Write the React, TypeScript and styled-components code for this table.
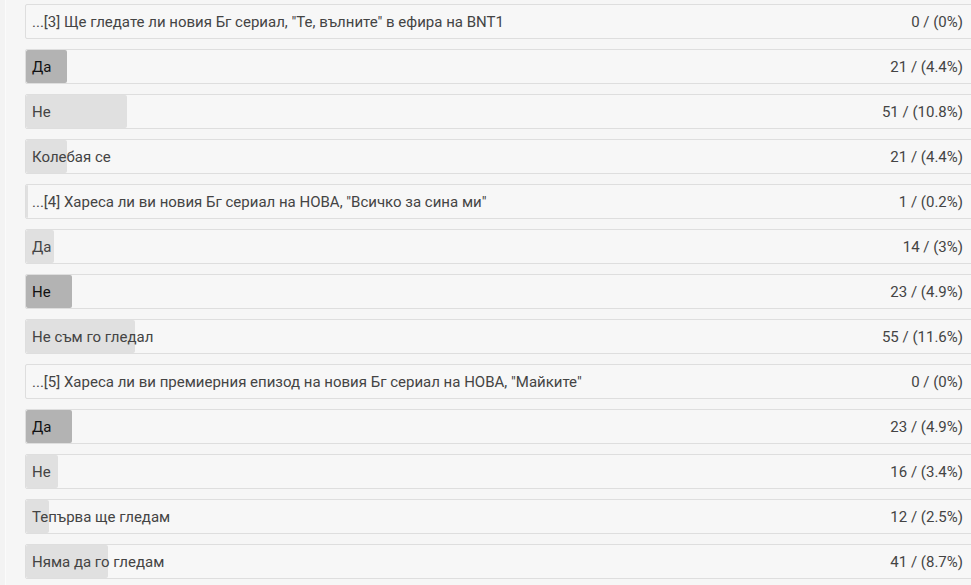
import { FC, ReactElement } from 'react'
import styled, { createGlobalStyle } from 'styled-components'

type Answer = { label: string, votes: number, pct: number, mine?: boolean, question?: boolean }

const ROW_WIDTH = 950
const BAR_SCALE = 938

const rows: Answer[] = [
  { label: '...[3] Ще гледате ли новия Бг сериал, "Те, вълните" в ефира на BNT1', votes: 0, pct: 0, question: true },
  { label: 'Да', votes: 21, pct: 4.4, mine: true },
  { label: 'Не', votes: 51, pct: 10.8 },
  { label: 'Колебая се', votes: 21, pct: 4.4 },
  { label: '...[4] Хареса ли ви новия Бг сериал на НОВА, "Всичко за сина ми"', votes: 1, pct: 0.2, question: true },
  { label: 'Да', votes: 14, pct: 3 },
  { label: 'Не', votes: 23, pct: 4.9, mine: true },
  { label: 'Не съм го гледал', votes: 55, pct: 11.6 },
  { label: '...[5] Хареса ли ви премиерния епизод на новия Бг сериал на НОВА, "Майките"', votes: 0, pct: 0, question: true },
  { label: 'Да', votes: 23, pct: 4.9, mine: true },
  { label: 'Не', votes: 16, pct: 3.4 },
  { label: 'Тепърва ще гледам', votes: 12, pct: 2.5 },
  { label: 'Няма да го гледам', votes: 41, pct: 8.7 }
]

const App: FC = (): ReactElement => {
  return (
    <>
      <GlobalStyle />
      <Results>
        {rows.map((r, i) => (
          <Row key={i}>
            <Bar $mine={r.mine} style={{ width: `${Math.round((r.pct / 100) * BAR_SCALE)}px` }} />
            <Label $mine={r.mine}>{r.label}</Label>
            <Count>{r.votes} / ({r.pct}%)</Count>
          </Row>
        ))}
      </Results>
    </>
  )
}

const GlobalStyle = createGlobalStyle`
  html, body {
    margin: 0;
    padding: 0;
    background: #f3f3f3;
    overflow: hidden;
  }
  body {
    font-family: Roboto, 'Liberation Sans', sans-serif;
  }
`
const Results = styled.div`
  display: flex;
  flex-direction: column;
  gap: 10px;
  margin-left: 5px;
  padding: 4px 0 10px 19px;
  border-left: 1px solid #fbfbfb;
  background: #f6f6f6;
  min-height: 585px;
  box-sizing: border-box;
`
const Row = styled.div`
  position: relative;
  display: flex;
  align-items: center;
  justify-content: space-between;
  width: ${ROW_WIDTH}px;
  height: 35px;
  box-sizing: border-box;
  padding: 0 11px 0 6px;
  background: #f7f7f7;
  border: 1px solid #dedede;
  border-radius: 2px;
  font-size: 15px;
  color: #444;
  overflow: hidden;
`
const Bar = styled.div<{ $mine?: boolean }>`
  position: absolute;
  left: 0;
  top: 0;
  bottom: 0;
  background: ${p => p.$mine ? '#b3b3b3' : '#e0e0e0'};
  border-radius: 2px;
`
const Label = styled.span<{ $mine?: boolean }>`
  position: relative;
  color: ${p => p.$mine ? '#111' : '#444'};
  white-space: nowrap;
`
const Count = styled.span`
  position: relative;
  color: #444;
`

export default App
